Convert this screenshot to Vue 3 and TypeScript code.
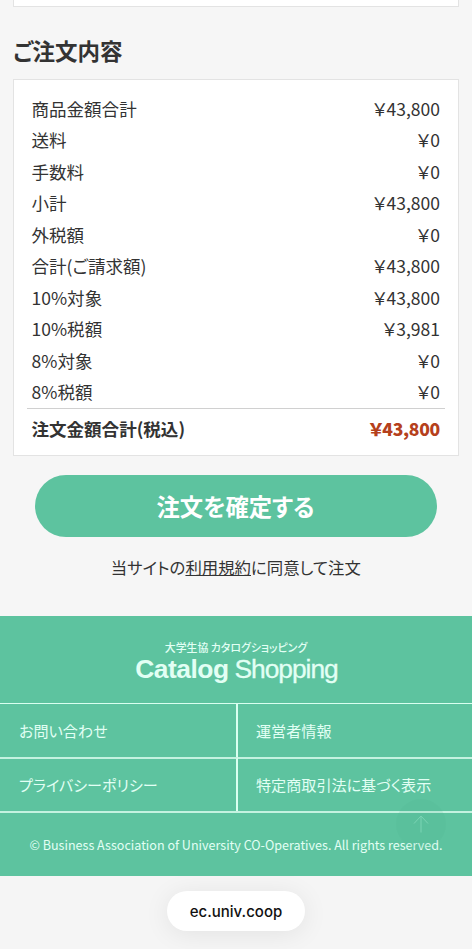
<script setup lang="ts">
interface Row {
  label: string
  price: string
}

const rows: Row[] = [
  { label: '商品金額合計', price: '43,800' },
  { label: '送料', price: '0' },
  { label: '手数料', price: '0' },
  { label: '小計', price: '43,800' },
  { label: '外税額', price: '0' },
  { label: '合計(ご請求額)', price: '43,800' },
  { label: '10%対象', price: '43,800' },
  { label: '10%税額', price: '3,981' },
  { label: '8%対象', price: '0' },
  { label: '8%税額', price: '0' },
]

const links: string[] = ['お問い合わせ', '運営者情報', 'プライバシーポリシー', '特定商取引法に基づく表示']
</script>

<template>
  <div class="page">
    <main class="content">
      <div class="previous-card"></div>
      <h2 class="title">ご注文内容</h2>
      <section class="summary">
        <dl class="rows">
          <div v-for="row in rows" :key="row.label" class="row">
            <dt>{{ row.label }}</dt>
            <dd>￥{{ row.price }}</dd>
          </div>
        </dl>
        <div class="total">
          <span>注文金額合計(税込)</span>
          <strong>￥43,800</strong>
        </div>
      </section>
      <button class="confirm" type="button">注文を確定する</button>
      <p class="terms">当サイトの<a>利用規約</a>に同意して注文</p>
    </main>

    <footer class="footer">
      <div class="logo">
        <span class="logo-sub">大学生協 カタログショッピング</span>
        <span class="logo-main"><b>Catalog</b><i>Shopping</i></span>
      </div>
      <nav class="links">
        <a v-for="link in links" :key="link">{{ link }}</a>
      </nav>
      <p class="copyright">© Business Association of University CO-Operatives. All rights reserved.</p>
      <div class="page-top">
        <svg width="16" height="18" viewBox="0 0 16 18" fill="none" stroke="currentColor" stroke-width="1">
          <path d="M8 17.5V1M1 8.5L8 1L15 8.5" />
        </svg>
      </div>
    </footer>

    <div class="browser-bar">
      <div class="address">ec.univ.coop</div>
    </div>
  </div>
</template>

<style>
body {
  background: #f6f6f6;
}
</style>

<style scoped>
.page {
  height: 949px;
  display: flex;
  flex-direction: column;
  overflow: hidden;
  background: #f6f6f6;
  color: #333;
  font-family: "Noto Sans CJK JP", sans-serif;
  font-feature-settings: "palt";
}
.content {
  height: 616px;
  box-sizing: border-box;
  padding: 0 13px 0 12.5px;
  display: flex;
  flex-direction: column;
}
.previous-card {
  height: 6px;
  flex: none;
  background: #fff;
  border: 1px solid #e3e3e3;
  border-top: 0;
}
.title {
  margin: 25px 0 0;
  padding-left: 0.5px;
  height: 36px;
  line-height: 36px;
  font-size: 22.5px;
  font-weight: 700;
}
.summary {
  margin-top: 11px;
  height: 377px;
  flex: none;
  box-sizing: border-box;
  border: 1px solid #e3e3e3;
  background: #fff;
  padding: 12.5px 13px 0;
}
.rows {
  margin: 0;
  padding: 0 5px;
}
.row,
.total {
  display: flex;
  justify-content: space-between;
  font-size: 17.55px;
}
.row {
  height: 31.5px;
  line-height: 31.5px;
}
.row dd {
  margin: 0;
}
.total {
  border-top: 1px solid #d0d0d0;
  padding: 4px 5px 0;
  line-height: 32px;
  font-weight: 700;
}
.total strong {
  color: #b5401c;
  letter-spacing: -0.3px;
}
.confirm {
  margin: 19px 22px 0 22.5px;
  height: 62px;
  flex: none;
  border: 0;
  padding: 0 1px 1px 0;
  border-radius: 31px;
  background: #5dc39f;
  color: #fff;
  font: inherit;
  font-size: 23.3px;
  font-weight: 700;
  font-feature-settings: "palt";
}
.terms {
  margin: 16px 0 0;
  line-height: 28px;
  font-size: 16.4px;
  text-align: center;
}
.terms a {
  text-decoration: underline;
}
.footer {
  position: relative;
  height: 260px;
  flex: none;
  background: #5dc39f;
  color: #e2fff4;
}
.logo {
  height: 87px;
  box-sizing: border-box;
  padding-top: 23px;
  display: flex;
  flex-direction: column;
  align-items: center;
}
.logo-sub {
  height: 16px;
  line-height: 16px;
  font-size: 10.9px;
  font-weight: 500;
  white-space: pre;
}
.logo-main {
  display: flex;
  gap: 6px;
  padding-left: 1px;
  font-family: "Liberation Sans", Arial, sans-serif;
  font-size: 26.4px;
  line-height: 28px;
}
.logo-main b {
  letter-spacing: -0.5px;
}
.logo-main i {
  font-style: normal;
  letter-spacing: -1.05px;
  -webkit-text-stroke: 0.3px currentColor;
}
.links {
  display: grid;
  grid-template-columns: 238px 1fr;
  grid-template-rows: 54px 54px;
  border-bottom: 2px solid #c4f2e0;
}
.links a {
  box-sizing: border-box;
  border-top: 1px solid #d9fff0;
  padding-left: 19px;
  font-size: 15.1px;
  line-height: 52px;
}
.links a:nth-child(n + 3) {
  border-top: 2px solid #c4f2e0;
  line-height: 51px;
}
.links a:nth-child(odd) {
  border-right: 2px solid #d9fff0;
}
.links a:nth-child(even) {
  padding-left: 18px;
}
.copyright {
  margin: 21px 0 0;
  line-height: 22px;
  font-size: 12.55px;
  text-align: center;
  white-space: nowrap;
}
.page-top {
  position: absolute;
  right: 26px;
  top: 183px;
  width: 50px;
  height: 50px;
  border-radius: 50%;
  display: flex;
  align-items: center;
  justify-content: center;
  background: rgba(80, 175, 140, 0.14);
  color: #7bd4b4;
}
.browser-bar {
  flex: 1;
  display: flex;
  justify-content: center;
  align-items: flex-start;
  padding-top: 15px;
  background: #f5f5f5;
}
.address {
  width: 138px;
  height: 40px;
  border-radius: 20px;
  background: #fff;
  box-shadow: 0 3px 26px rgba(0, 0, 0, 0.08);
  color: #111;
  text-align: center;
  font: 500 15px/41px Inter, sans-serif;
}
</style>
